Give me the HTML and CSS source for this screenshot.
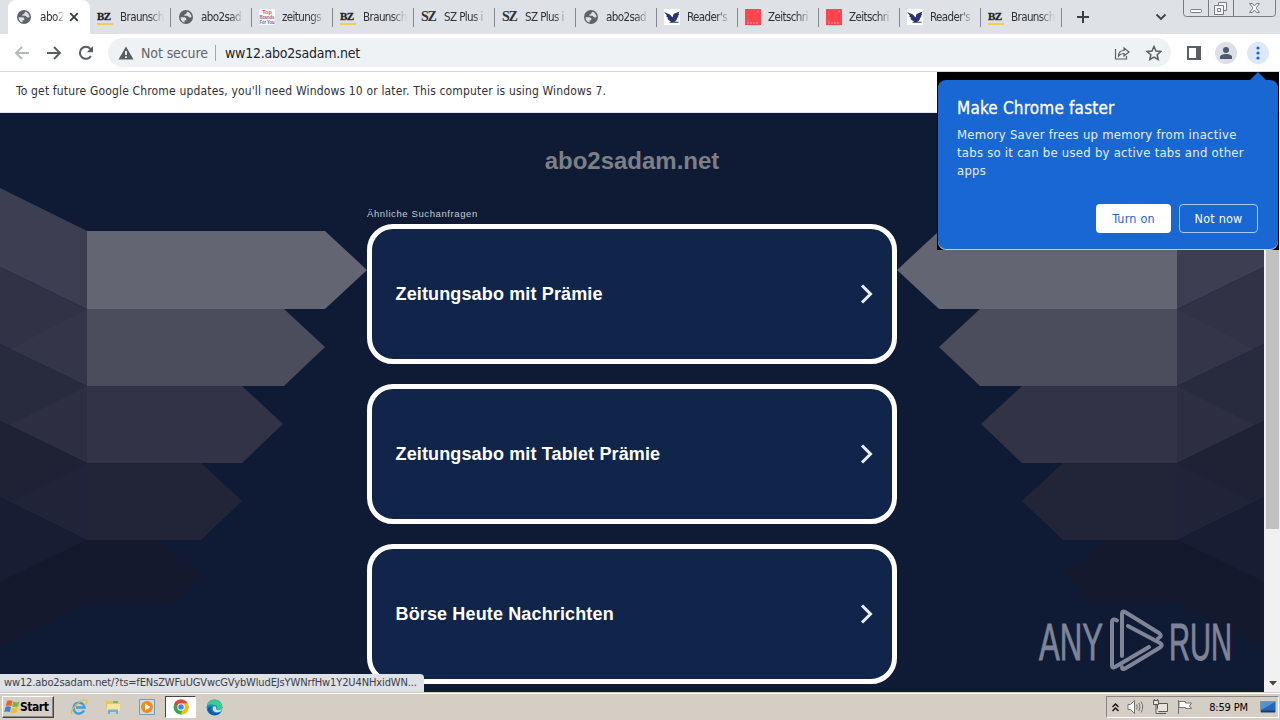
FILE: index.html
```html
<!DOCTYPE html>
<html lang="de">
<head>
    <meta charset="UTF-8">
    <title>abo2sadam.net</title>
    <link rel="stylesheet" href="styles.css">
</head>
<body>

    <!-- Shared icons -->
    <svg class="defs" width="0" height="0">
        <symbol id="globe" viewBox="0 0 16 16">
            <circle cx="8" cy="8" r="7" fill="#5f6368"/>
            <path d="M2.5 8.2h3.6c1.6 0 2.2.7 2.2 2v1.1H6.6v2.2C4.2 13 2.6 11 2.5 8.2zM9.6 2.7c2.2.7 3.8 2.8 3.9 5.2-.8.9-2.300.9-3-.1-.5-.8-1.200-1.100-2.200-1.100H6.500V5.300c1.500 0 2-.5 2-1.400 0-.6.4-1 1.100-1.200z" fill="#dee1e6"/>
        </symbol>
        <symbol id="bird" viewBox="0 0 16 16">
            <rect width="16" height="16" fill="#fff"/>
            <path d="M0 3l6 2.500 2.500 3L9.500 5l6-2.500-1 2.500.8.500-1.500 1.500.7.7-1.500 1.300c0 2-1 3-3 3.800h4.500v1H5l2-1.600c-1.800-.4-3-1.500-3.700-2.700l1-.4-2.500-2 1.200-.3z" fill="#27366b"/>
        </symbol>
        <symbol id="red" viewBox="0 0 16 16">
            <rect width="16" height="16" fill="#fb4650"/>
            <path d="M2 14h12M2 12.500l1-1M12 3l2-1" stroke="#ff9aa0" stroke-dasharray="2 1"/>
        </symbol>
        <symbol id="arms" viewBox="0 0 367 546">
            <path d="M0 75l87 43v78L0 154z" fill="#3d3e52"/>
            <path d="M0 154l87 42v77L0 231z" fill="#313246"/>
            <path d="M10 236l77-40v77z" fill="#343548"/>
            <path d="M0 231l87 42v77L0 308z" fill="#282a3e"/>
            <path d="M10 312l77-39v77z" fill="#2d2e42"/>
            <path d="M0 308l87 42v77L0 384z" fill="#1f2135"/>
            <path d="M10 389l77-39v77z" fill="#212438"/>
            <path d="M0 384l87 43-87 42z" fill="#191d33"/>
            <path d="M0 469l87-42v64L0 534z" fill="#14192e"/>
            <path d="M87 118h238l42 39-42 39H87z" fill="#636573"/>
            <path d="M87 196h197l41 38-41 39H87z" fill="#4b4d5c"/>
            <path d="M87 273h155l41 38-41 39H87z" fill="#323346"/>
            <path d="M87 350h114l41 38-41 39H87z" fill="#222538"/>
            <path d="M87 427h73l41 34-28 30H87z" fill="#14192e"/>
        </symbol>
    </svg>

    <!-- Tab strip -->
    <div class="tabs">
        <div class="tab active">
            <svg class="favicon"><use href="#globe"/></svg>
            <span class="label">abo2</span>
            <svg class="close" width="10" height="10" viewBox="0 0 10 10"><path d="M1.200 1.200l7.600 7.600M8.800 1.200L1.200 8.800" stroke="#3c4043" stroke-width="1.900"/></svg>
        </div>
        <div class="tab"><span class="favicon bz">BZ</span><span class="label">Braunsch</span></div>
        <div class="tab"><svg class="favicon"><use href="#globe"/></svg><span class="label">abo2sad</span></div>
        <div class="tab">
            <svg class="favicon" viewBox="0 0 16 16">
                <rect width="16" height="16" fill="#faf7fa"/>
                <g font-family="Liberation Sans" font-weight="bold" font-size="5.500" text-anchor="middle">
                    <text x="8" y="5" fill="#e5544f">Top</text>
                    <text x="8" y="10" fill="#a35b78" textLength="15" lengthAdjust="spacingAndGlyphs">Brands</text>
                    <text x="8" y="15" fill="#6b5d80" textLength="15" lengthAdjust="spacingAndGlyphs">For You</text>
                </g>
            </svg>
            <span class="label">zeitungs</span>
        </div>
        <div class="tab"><span class="favicon bz">BZ</span><span class="label">Braunsch</span></div>
        <div class="tab"><span class="favicon sz">SZ</span><span class="label">SZ Plus i</span></div>
        <div class="tab"><span class="favicon sz">SZ</span><span class="label">SZ Plus i</span></div>
        <div class="tab"><svg class="favicon"><use href="#globe"/></svg><span class="label">abo2sad</span></div>
        <div class="tab"><svg class="favicon"><use href="#bird"/></svg><span class="label">Reader's</span></div>
        <div class="tab"><svg class="favicon"><use href="#red"/></svg><span class="label">Zeitschri</span></div>
        <div class="tab"><svg class="favicon"><use href="#red"/></svg><span class="label">Zeitschri</span></div>
        <div class="tab"><svg class="favicon"><use href="#bird"/></svg><span class="label">Reader's</span></div>
        <div class="tab"><span class="favicon bz">BZ</span><span class="label">Braunsch</span></div>
        <svg class="new-tab" width="12" height="12" viewBox="0 0 12 12"><path d="M6 0v12M0 6h12" stroke="#3c4043" stroke-width="2"/></svg>
        <svg class="chevron" width="12" height="8" viewBox="0 0 12 8"><path d="M1.500 1.500L6 6l4.500-4.500" fill="none" stroke="#3c4043" stroke-width="1.800"/></svg>
        <div class="window-buttons">
            <svg width="93" height="17" viewBox="0 0 93 17" fill="none" stroke="#777b84">
                <path d="M.5 0v13.500q0 3 3 3h86q3 0 3-3V0M25.500 0v16M50.500 0v16"/>
                <rect x="7.500" y="9.500" width="11" height="3" rx="1" fill="#fff"/>
                <path d="M35.500 5V2.500h8v8h-3M33 5.500h7.500v9h-9v-9zM34.500 8.500h3v3h-3z" fill="#f5f5f7"/>
                <path d="M66.500 3.500h3l2 2.500 2-2.500h3l-3.500 4.500 3.500 4.500h-3l-2-2.500-2 2.500h-3L70 8z" fill="#fff"/>
            </svg>
        </div>
    </div>

    <!-- Toolbar -->
    <div class="toolbar">
        <div class="nav">
            <svg width="16" height="16" viewBox="0 0 16 16" fill="none" stroke="#b5b7ba" stroke-width="1.900"><path d="M15 8H2.500M8 2L2 8l6 6"/></svg>
            <svg width="16" height="16" viewBox="0 0 16 16" fill="none" stroke="#5a5d61" stroke-width="1.900"><path d="M1 8h12.500M8 2l6 6-6 6"/></svg>
            <svg width="16" height="16" viewBox="0 0 16 16"><path d="M13 11a6 6 0 1 1-.6-7.100L14 5.500" fill="none" stroke="#5a5d61" stroke-width="2"/><path d="M15 1v6.200H8.800z" fill="#5a5d61"/></svg>
        </div>
        <div class="omnibox">
            <svg width="16" height="14" viewBox="0 0 16 14"><path d="M8 .5L15.500 13.500H.5z" fill="#5a5d61"/><path d="M8 5v4M8 10.200v1.800" stroke="#fff" stroke-width="1.700"/></svg>
            <span class="secure">Not secure</span>
            <span class="divider"></span>
            <span class="address">ww12.abo2sadam.net</span>
            <svg class="share" width="16" height="16" viewBox="0 0 16 16" fill="none" stroke="#5a5d61" stroke-width="1.200"><path d="M1.500 4v10h11v-3M4.500 11c0-4 2-5.500 5.500-5.500V3l5 4-5 4V8.500C7.500 8.500 6 9.200 4.500 11z"/></svg>
            <svg class="star" width="16" height="16" viewBox="0 0 16 16"><path d="M8 1.500l2 4.500 4.800.5-3.600 3.200 1 4.800L8 12l-4.200 2.500 1-4.800L1.200 6.500 6 6z" fill="none" stroke="#5a5d61" stroke-width="1.500"/></svg>
        </div>
        <svg class="panel" width="14" height="14" viewBox="0 0 14 14"><path d="M1 1h12v12H1z" fill="#fff" stroke="#5a5d61" stroke-width="2"/><path d="M9 1h4v12H9z" fill="#5a5d61"/></svg>
        <span class="round avatar"><svg width="14" height="14" viewBox="0 0 14 14" fill="#4c5970"><circle cx="7" cy="4" r="3"/><path d="M1 13v-2c0-4 12-4 12 0v2z"/></svg></span>
        <span class="round menu"><svg width="4" height="14" viewBox="0 0 4 14" fill="#1967d2"><circle cx="2" cy="2" r="1.600"/><circle cx="2" cy="7" r="1.600"/><circle cx="2" cy="12" r="1.600"/></svg></span>
    </div>

    <div class="infobar">To get future Google Chrome updates, you'll need Windows 10 or later. This computer is using Windows 7.</div>

    <!-- Page -->
    <div class="viewport">
        <div class="page">
            <svg class="backdrop" width="1264" height="579" viewBox="0 0 1264 579">
                <use href="#arms" width="367" height="546"/>
                <use href="#arms" width="367" height="546" transform="translate(1264 0) scale(-1 1)"/>
            </svg>
            <div class="content">
                <h1>abo2sadam.net</h1>
                <p class="related">Ähnliche Suchanfragen</p>
                <a class="card"><span>Zeitungsabo mit Prämie</span><svg width="13" height="20" viewBox="0 0 13 20"><path d="M2 1.500l8.500 8.500L2 18.500" fill="none" stroke="#e9eef5" stroke-width="3"/></svg></a>
                <a class="card"><span>Zeitungsabo mit Tablet Prämie</span><svg width="13" height="20" viewBox="0 0 13 20"><path d="M2 1.500l8.500 8.500L2 18.500" fill="none" stroke="#e9eef5" stroke-width="3"/></svg></a>
                <a class="card"><span>Börse Heute Nachrichten</span><svg width="13" height="20" viewBox="0 0 13 20"><path d="M2 1.500l8.500 8.500L2 18.500" fill="none" stroke="#e9eef5" stroke-width="3"/></svg></a>
            </div>
            <svg class="watermark" width="196" height="66" viewBox="0 0 196 66">
                <g fill="#7f8497" stroke="#7f8497" stroke-width=".9" font-family="Liberation Sans" font-size="52">
                    <text x="3" y="52" textLength="64" lengthAdjust="spacingAndGlyphs">ANY</text>
                    <text x="133" y="52" textLength="63" lengthAdjust="spacingAndGlyphs">RUN</text>
                </g>
                <g fill="none" stroke="#7f8497" stroke-width="4" stroke-linecap="round" stroke-linejoin="round">
                    <path d="M81 12.500q-5-3-5 2v43q0 3 3 1.500L113 39"/>
                    <path d="M86 48V6q0-3.500 3-2l34 21q4 3-1 5.500"/>
                    <path d="M92 18l32 17q3.500 2 0 4.500L90 60q-4 2.500-4-1"/>
                </g>
            </svg>
            <div class="status">ww12.abo2sadam.net/?ts=fENsZWFuUGVwcGVybWludEJsYWNrfHw1Y2U4NHxidWN...</div>
        </div>
        <div class="scrollbar">
            <div class="thumb"></div>
            <svg width="8" height="5" viewBox="0 0 8 5"><path d="M0 0h8L4 4.500z" fill="#444"/></svg>
        </div>
    </div>

    <!-- Memory saver bubble -->
    <div class="promo">
        <svg class="tip" width="18" height="9" viewBox="0 0 18 9"><path d="M0 9l9-9 9 9z" fill="#1967d2"/></svg>
        <div class="promo-body">
            <h2>Make Chrome faster</h2>
            <p>Memory Saver frees up memory from inactive<br>tabs so it can be used by active tabs and other<br>apps</p>
            <div class="actions">
                <button class="primary">Turn on</button>
                <button>Not now</button>
            </div>
        </div>
    </div>

    <!-- Taskbar -->
    <div class="taskbar">
        <div class="start">
            <svg width="16" height="16" viewBox="0 0 16 16"><path d="M3 2q3-1.500 5.500 0L7.300 7Q4.500 5.800 1.800 7z" fill="#e8642c"/><path d="M9.300 2.500q3 1.300 6 0L14 7.500q-3 1.200-5.800 0z" fill="#79b83b"/><path d="M1.500 8q3-1.300 5.500 0l-1.200 5Q3 11.800.3 13z" fill="#3b84d0"/><path d="M7.900 8.500q3 1.300 6 0l-1.300 5q-3 1.200-5.800 0z" fill="#f6bd2b"/></svg>
            <b>Start</b>
        </div>
        <div class="launch">
            <svg width="18" height="18" viewBox="0 0 18 18" fill="none"><path d="M14 12.500A5.500 5.500 0 1 1 14.500 9.500H6" stroke="#35a2e2" stroke-width="2.400"/><path d="M2 16C-1 13 10 1 16 2c2 .4 1 3-.3 4.500" stroke="#e5b93c" stroke-width="1.200"/></svg>
        </div>
        <div class="launch">
            <svg width="16" height="16" viewBox="0 0 16 16"><path d="M1 2h6l1 2h7v6H1z" fill="#e7c65c"/><path d="M2 5h13v7H2z" fill="#f8e69d"/><path d="M3 15v-4.500h10V15h-2v-2H5v2z" fill="#69b4de"/><path d="M8 2h5v2H8z" fill="#75b96b"/></svg>
        </div>
        <div class="launch">
            <svg width="16" height="16" viewBox="0 0 16 16"><path d="M.5.5h15v15H.5z" fill="#c8dcea" stroke="#6c9fc4"/><circle cx="8" cy="8" r="6" fill="#f28a1c"/><path d="M6 4.500v7L11.500 8z" fill="#fff"/></svg>
        </div>
        <div class="launch current">
            <svg width="16" height="16" viewBox="0 0 16 16"><circle cx="8" cy="8" r="7.500" fill="#34a853"/><path d="M1.500 4.200A7.500 7.500 0 0 1 14.500 4.200L8 8z" fill="#ea4335"/><path d="M14.500 4.200A7.500 7.500 0 0 1 7.500 15.500L10.500 9 8 4.200z" fill="#fbbc05"/><path d="M1.500 4.200L5 10l3-6z" fill="#ea4335"/><circle cx="8" cy="8" r="3.700" fill="#fff"/><circle cx="8" cy="8" r="2.800" fill="#4285f4"/></svg>
        </div>
        <div class="launch edge">
            <svg width="17" height="17" viewBox="0 0 17 17"><circle cx="8.500" cy="8.500" r="8" fill="#168bd1"/><path d="M1 7C2-1 15-2 16.500 8c.3 3-4 4-6 2 1.500-2 .5-4-2-4C5 5 2 5.500 1 7z" fill="#3ccb90"/><path d="M6 7.500c-2 3.500 1 7.500 6 6.500 1.500-.2 2.500-1 3-1.500-3 5-10 5-13-.5C1 9 3 7 6 7.500z" fill="#145ba8"/><path d="M7 8c2-2 4 0 3 2 1.500 2 5 1.500 6.500-.5-1 4-5 4-7 3.500S6 10 7 8z" fill="#d4e5ea"/></svg>
        </div>
        <div class="tray">
            <svg width="7" height="9" viewBox="0 0 7 9" fill="none" stroke="#111" stroke-width="1.400"><path d="M.5 4l3-3 3 3M.5 8l3-3 3 3"/></svg>
            <svg width="17" height="16" viewBox="0 0 17 16" fill="none" stroke="#77736e"><path d="M1 5.500h2.500l4-4v13l-4-4H1z" fill="#fff"/><path d="M9.500 5.500q1.500 2.500 0 5M11.800 4q2.500 4 0 8M14 2.500q3.500 5.500 0 11"/></svg>
            <svg width="17" height="16" viewBox="0 0 17 16" fill="#e8e5df" stroke="#5b5854"><path d="M5.500 4.500h10v8h-10zM7 14.500h7"/><path d="M1.500 1.500h5v4h-5zM4 6v8.500h3M2.500 0v2M5.500 0v2"/></svg>
            <svg width="16" height="16" viewBox="0 0 16 16" fill="#fff" stroke="#77736e"><path d="M1.500 1v14M2 2.500h6.500v1.500h6l-2 3 2 2.500h-6V8.500H2z"/></svg>
            <span class="clock">8:59 PM</span>
            <svg width="16" height="13" viewBox="0 0 16 13"><path d="M.5.500h15v10H.5z" fill="#2469b5" stroke="#8294a7"/><path d="M1 1h14L1 9z" fill="#4e93d5"/><path d="M1 10.500h14" stroke="#143d74" stroke-width="2"/></svg>
        </div>
    </div>

</body>
</html>
```

FILE: styles.css
```css
* {
    box-sizing: border-box;
}
body {
    margin: 0;
    width: 1280px;
    height: 720px;
    overflow: hidden;
    position: relative;
    display: flex;
    flex-direction: column;
    background: #fff;
    color: #303236;
    font-family: "DejaVu Sans Condensed", "DejaVu Sans", sans-serif;
    font-stretch: condensed;
}
svg {
    display: block;
    flex: none;
}
.defs {
    position: absolute;
}

/* Tab strip */
.tabs {
    height: 34px;
    flex: none;
    display: flex;
    align-items: center;
    background: #dee1e6;
}
.tab {
    width: 81px;
    height: 34px;
    padding-left: 7px;
    display: flex;
    align-items: center;
    font-size: 11.5px;
}
.tab::after {
    content: "";
    width: 1px;
    height: 19px;
    margin-left: auto;
    background: #85888e;
}
.tab.active {
    width: 82px;
    margin-left: 8px;
    padding-left: 8px;
    background: #fff;
    border-radius: 8px 8px 0 0;
}
.tab.active::after {
    display: none;
}
.favicon {
    width: 16px;
    height: 16px;
    flex: none;
}
.label {
    width: 44px;
    margin-left: 7px;
    white-space: nowrap;
    letter-spacing: -0.6px;
    -webkit-mask-image: linear-gradient(90deg, #000 65%, rgba(0, 0, 0, 0.1) 95%);
    mask-image: linear-gradient(90deg, #000 65%, rgba(0, 0, 0, 0.1) 95%);
}
.active .label {
    width: 25px;
    margin-left: 8px;
    letter-spacing: -0.4px;
}
.close {
    margin-left: 4px;
}
.bz {
    height: 15px;
    border-bottom: 2px solid #f0cf53;
    font: bold 11px/13px "Liberation Serif", serif;
    color: #222;
    letter-spacing: -0.5px;
    -webkit-text-stroke: 0.3px #222;
}
.sz {
    font: bold 14px/16px "Liberation Serif", serif;
    letter-spacing: -1.2px;
}
.new-tab {
    margin-left: 15px;
}
.chevron {
    margin-left: 66px;
}
.window-buttons {
    align-self: flex-start;
    margin-left: 16px;
}

/* Toolbar */
.toolbar {
    height: 38px;
    flex: none;
    display: flex;
    align-items: center;
    border-bottom: 1px solid #d5d7da;
    padding-left: 14px;
}
.nav {
    display: flex;
    gap: 16px;
    width: 94px;
}
.omnibox {
    width: 1063px;
    height: 29px;
    padding: 0 9px 0 10px;
    border-radius: 15px;
    background: #eff2f5;
    display: flex;
    align-items: center;
    font-size: 14px;
}
.secure {
    width: 70px;
    margin-left: 7px;
    color: #606469;
    white-space: nowrap;
    letter-spacing: -0.1px;
}
.divider {
    width: 1px;
    height: 16px;
    margin: 0 9px 0 4px;
    background: #a3a7ac;
}
.address {
    color: #222428;
    letter-spacing: -0.22px;
}
.share {
    margin-left: auto;
}
.star {
    margin-left: 16px;
}
.panel {
    margin-left: 16px;
}
.round {
    width: 22px;
    height: 22px;
    border-radius: 50%;
    display: flex;
    align-items: center;
    justify-content: center;
}
.avatar {
    margin-left: 14px;
    background: #dcdfe4;
}
.menu {
    margin-left: 10px;
    background: #dde8fb;
}
.infobar {
    height: 41px;
    flex: none;
    padding-left: 16px;
    font-size: 12px;
    line-height: 39px;
    letter-spacing: 0.16px;
    border-bottom: 1px solid #e3e4e6;
    white-space: nowrap;
}

/* Page */
.viewport {
    height: 579px;
    flex: none;
    display: flex;
}
.page {
    width: 1264px;
    position: relative;
    overflow: hidden;
    background: #0f1b35;
    font-family: "Liberation Sans", Arial, sans-serif;
}
.backdrop {
    position: absolute;
    left: 0;
    top: 0;
}
.content {
    position: relative;
    width: 530px;
    margin: 0 auto;
    padding-top: 34px;
}
.content h1 {
    margin: 0;
    text-align: center;
    font-size: 24px;
    line-height: 28px;
    color: #7c8086;
}
.related {
    margin: 32px 0 3px;
    font-size: 9.5px;
    line-height: 14px;
    letter-spacing: 0.6px;
    color: #c5cad3;
}
.card {
    height: 140px;
    margin-bottom: 20px;
    padding: 0 19px 0 23.5px;
    border: 5px solid #fff;
    border-radius: 26px;
    background: #11254b;
    display: flex;
    align-items: center;
    justify-content: space-between;
    color: #fff;
    font-size: 18px;
    font-weight: bold;
    letter-spacing: 0.14px;
}
.watermark {
    position: absolute;
    left: 1036px;
    top: 495px;
}
.status {
    position: absolute;
    left: 0;
    bottom: 0;
    width: 424px;
    height: 18px;
    padding-left: 4px;
    border-radius: 0 4px 0 0;
    background: #dee1e6;
    color: #3c4043;
    font: 11px/18px "DejaVu Sans Condensed", "DejaVu Sans", sans-serif;
    font-stretch: condensed;
    letter-spacing: -0.12px;
    white-space: nowrap;
}
.scrollbar {
    width: 16px;
    padding: 0 1px 6px 2px;
    background: #f1f1f1;
    display: flex;
    flex-direction: column;
    align-items: center;
    justify-content: space-between;
}
.thumb {
    width: 13px;
    height: 416px;
    background: #c1c1c1;
}

/* Memory saver bubble */
.promo {
    position: absolute;
    left: 937px;
    top: 72px;
    width: 342px;
    height: 178px;
    padding: 8px 1px 1px;
    background: #000;
}
.tip {
    position: absolute;
    left: 312px;
    top: 0;
}
.promo-body {
    height: 169px;
    padding: 18px 20px 0 19px;
    border-radius: 8px;
    background: #1967d2;
    box-shadow: 0 1px 0 #b8d0f1;
    color: #fff;
}
.promo h2 {
    margin: 0;
    font-size: 17px;
    font-weight: normal;
    line-height: 20px;
    letter-spacing: 0.18px;
    -webkit-text-stroke: 0.3px #fff;
}
.promo p {
    margin: 8px 0 24px;
    font-size: 13px;
    line-height: 18px;
    letter-spacing: 0.24px;
    white-space: nowrap;
    color: #e4eefc;
}
.actions {
    display: flex;
    justify-content: flex-end;
    gap: 8px;
}
.promo button {
    width: 79px;
    height: 29px;
    padding: 0;
    border: 1px solid #a9c8f3;
    border-radius: 4px;
    background: none;
    color: #fff;
    font: inherit;
    font-size: 12.5px;
    letter-spacing: 0.2px;
}
.promo .primary {
    width: 75px;
    border: none;
    background: #fff;
    color: #1967d2;
}

/* Taskbar */
.taskbar {
    height: 28px;
    flex: none;
    display: flex;
    align-items: center;
    padding: 2px 1px 1px 2px;
    border-top: 1px solid #d5cec5;
    background: #d5cec5;
    box-shadow: inset 0 1px 0 #fff;
}
.start {
    width: 52px;
    height: 22px;
    margin-right: 9px;
    padding-left: 1px;
    border: 1px solid;
    border-color: #fff #444 #444 #fff;
    box-shadow: inset -1px -1px 0 #8b867f;
    display: flex;
    align-items: center;
    color: #000;
    font-size: 12px;
    letter-spacing: -0.45px;
}
.launch {
    width: 31px;
    height: 22px;
    margin-right: 3px;
    display: flex;
    align-items: center;
    justify-content: center;
}
.launch.current {
    background: #fff;
    border: 1px solid;
    border-color: #444 #fff #fff #444;
}
.tray {
    width: 173px;
    height: 22px;
    margin-left: auto;
    padding: 0 2px 0 5px;
    border: 1px solid;
    border-color: #8b867f #fff #fff #8b867f;
    display: flex;
    align-items: center;
    justify-content: space-between;
    color: #000;
    font-size: 11px;
}
.clock {
    margin: 0 4px 0 8px;
    letter-spacing: -0.15px;
}
```
